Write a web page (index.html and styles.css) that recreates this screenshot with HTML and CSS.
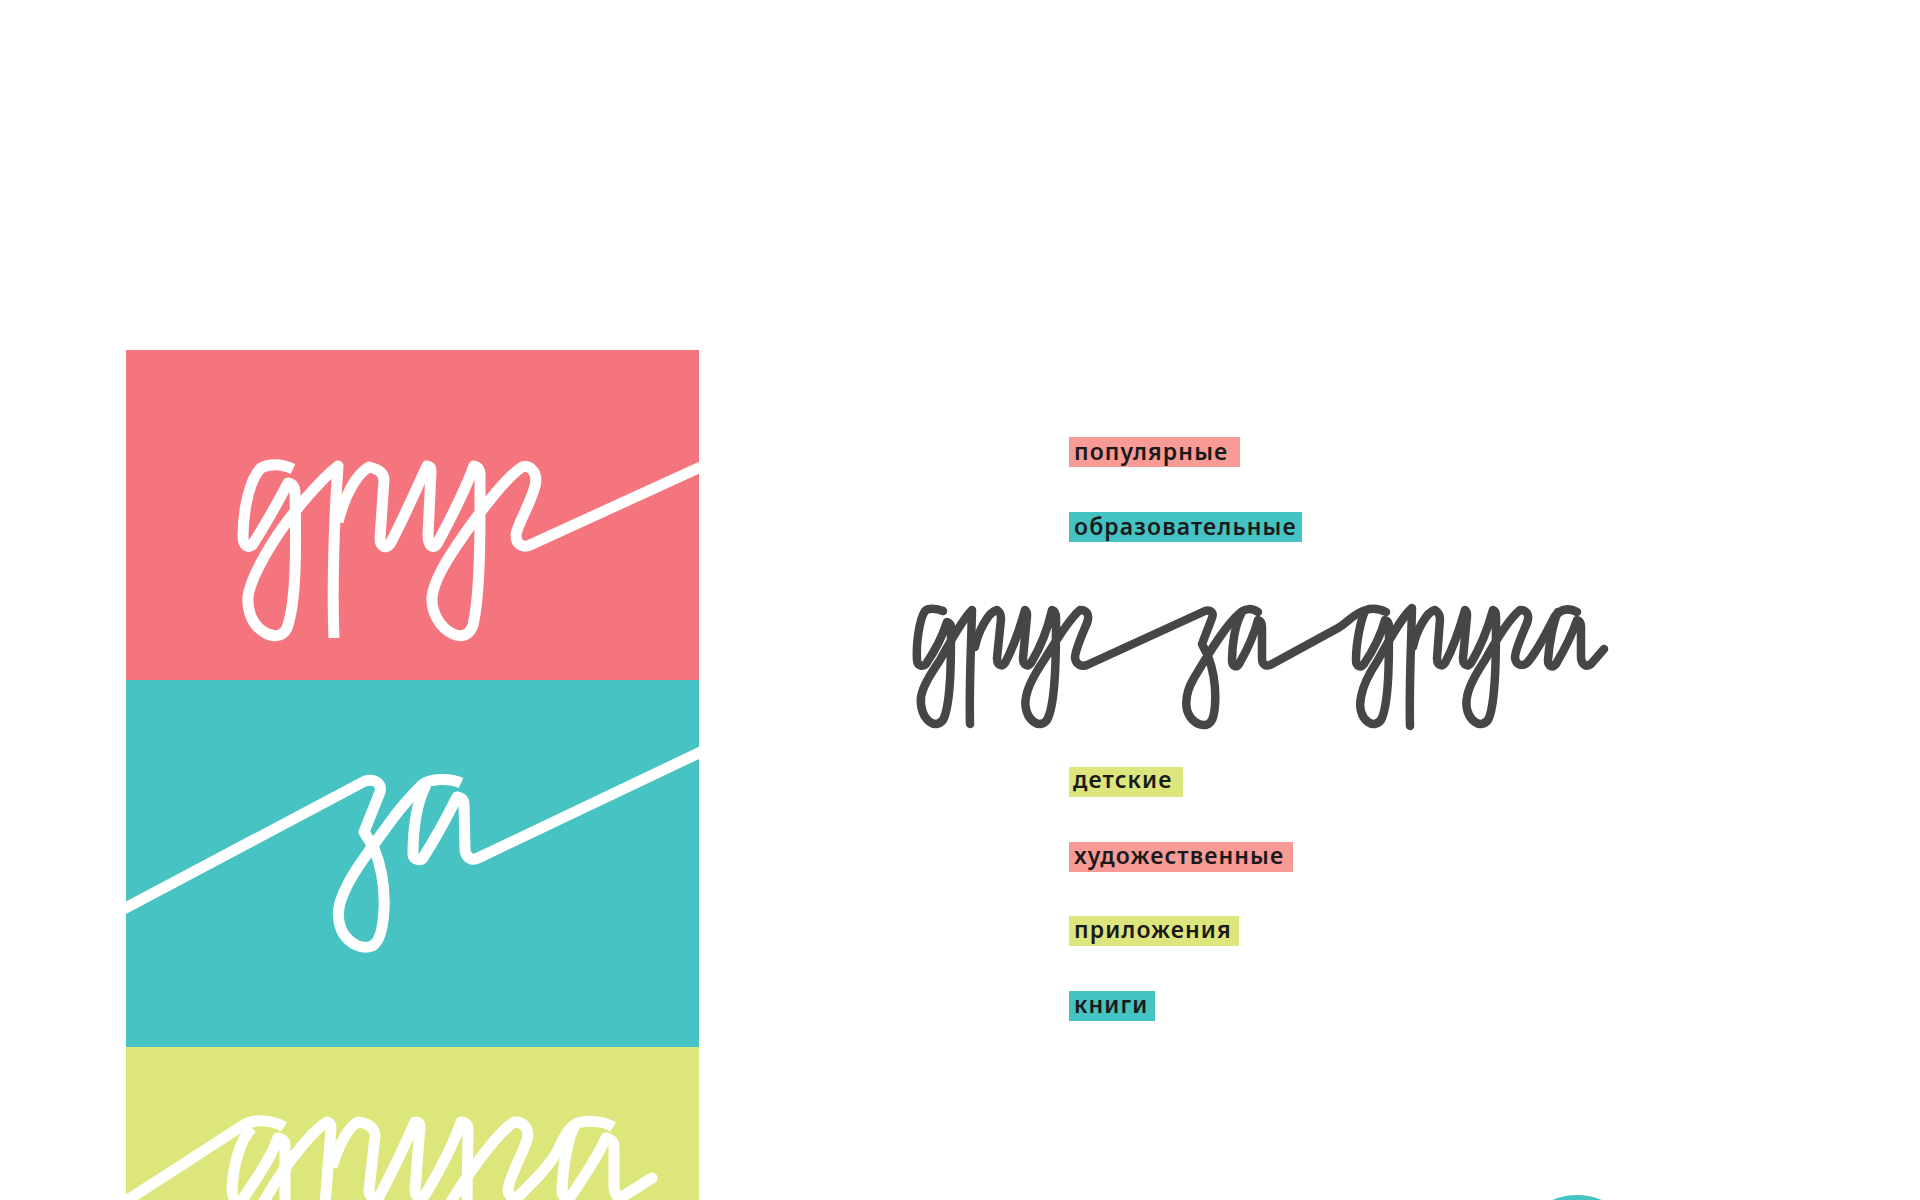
FILE: index.html
```html
<!DOCTYPE html>
<html lang="ru">

<head>
    <meta charset="utf-8">
    <title>Друг за друга</title>
    <link rel="stylesheet" href="styles.css">
</head>

<body>
    <div class="page">
        <div class="panels">
            <div class="panel panel-pink">
                <svg class="script" width="573" height="330" viewBox="126 350 573 330">
                    <path d="M293 469 C280 463 268 464 261 468 C250 478 243 510 243 536 C243 546 249 549 253 544 C265 525 279 500 288 483 C293 484 295 488 295 492 C296 540 297 600 287 628 C282 638 272 637 264 632 C252 625 247 610 248 597 C250 580 263 558 273 542 C290 515 320 480 338 466 C334 520 332 590 334 638" />
                    <path d="M338 522 C344 498 355 475 369 467 C378 469 384 473 384 480 L380 538 C380 547 386 549 390 544 C403 520 418 485 427 466 C431 467 431 468 431 472 L428 535 C428 547 434 549 437 544 C450 520 465 490 474 466 C478 467 480 470 480 474 C480 520 481 590 473 625 C469 637 460 637 453 634 C440 628 431 612 432 597 C434 580 447 560 457 545 C475 518 505 478 522 467 C532 464 538 475 535 486 C530 505 517 525 516 535 C516 545 523 548 530 545 L705 465" />
                </svg>
            </div>
            <div class="panel panel-teal">
                <svg class="script" width="573" height="367" viewBox="126 680 573 367">
                    <path d="M120 911 L365 781 C375 778 382 784 380 792 L364 832 L374 848 C382 868 385 890 384 910 C383 928 380 942 372 946 C362 950 350 944 343 933 C337 922 337 908 342 897 C350 875 370 850 388 825 C400 808 412 795 422 785 C430 778 450 778 461 783" />
                    <path d="M426 785 C418 800 413 825 413 855 C414 860 420 861 423 858 C433 842 448 815 457 797 C462 798 464 801 464 805 L465 850 C466 858 472 861 478 858 L705 750" />
                </svg>
            </div>
            <div class="panel panel-yellow">
                <svg class="script" width="573" height="153" viewBox="126 1047 573 153">
                    <path d="M120 1205 L242 1126 C252 1119 272 1119 284 1127" />
                    <path d="M252 1128 C240 1140 233 1165 232 1190 C232 1198 236 1202 241 1202 C255 1180 270 1160 278 1138 C283 1139 285 1141 285 1146 L285 1205" />
                    <path d="M262 1205 C280 1172 310 1132 327 1122 C330 1123 331 1125 331 1128 L325 1205" />
                    <path d="M332 1167 C338 1148 347 1128 358 1122 C368 1123 375 1128 375 1136 L369 1190 C369 1198 376 1199 380 1195 C392 1172 405 1145 415 1122 C419 1122 420 1124 420 1127 L415 1190 C415 1198 421 1199 425 1195 C440 1170 452 1148 461 1122 C465 1122 468 1125 468 1129 L467 1205" />
                    <path d="M449 1205 C465 1178 495 1135 514 1122 C524 1121 530 1130 527 1140 C520 1160 508 1180 508 1190 C509 1198 515 1199 520 1195 C535 1180 550 1165 558 1150 C565 1135 570 1126 578 1123 C588 1120 604 1121 613 1127" />
                    <path class="tip" d="M576 1124 C568 1135 563 1165 562 1192 C563 1198 568 1199 571 1196 C582 1180 598 1155 606 1138 C611 1139 614 1142 614 1146 L614 1188 C615 1197 620 1199 625 1195 L652 1178" />
                </svg>
            </div>
        </div>

        <div class="side">
            <ul class="tags">
                <li><span class="tag tag-pink tag-wide">популярные</span></li>
                <li><span class="tag tag-teal tag-tight">образовательные</span></li>
            </ul>
            <svg class="script script-dark" width="720" height="135" viewBox="905 600 720 135">
                <path d="M943 611 C936 608 928 608 925 611 C919 620 916 645 917 660 C917 666 923 667 926 664 C934 652 943 635 947 622 C950 623 951 625 951 628 C951 660 951 700 944 718 C941 725 934 725 930 722 C923 717 920 707 921 697 C923 685 932 672 940 660 C950 642 962 620 972 610 C971 650 969 690 970 724" />
                <path d="M975 647 C978 632 988 612 997 610 C1000 612 1001 615 1001 619 L997 658 C997 666 1002 667 1005 663 C1012 650 1020 628 1025 610 C1027 611 1027 613 1027 616 L1023 658 C1023 666 1028 667 1031 663 C1040 648 1048 628 1052 610 C1055 611 1056 614 1056 618 C1056 650 1056 700 1048 718 C1045 725 1038 725 1034 722 C1027 717 1024 707 1026 697 C1028 685 1036 672 1044 660 C1055 642 1070 618 1080 610 C1087 610 1090 615 1087 623 C1082 635 1075 650 1075 658 C1076 665 1082 667 1087 665 L1205 611 C1211 609 1214 613 1212 618 L1202 644 L1208 656 C1214 672 1216 690 1215 705 C1214 718 1212 723 1206 725 C1198 726 1190 720 1187 710 C1185 700 1188 688 1194 678 C1205 660 1225 625 1240 613 C1245 608 1252 608 1258 612" />
                <path d="M1241 614 C1235 625 1232 645 1232 660 C1232 667 1237 668 1239 664 C1246 652 1254 635 1258 620 C1261 621 1262 623 1262 627 L1262 658 C1262 666 1267 667 1272 664 L1338 628 C1348 622 1354 613 1366 610 C1372 608 1380 609 1386 612" />
                <path d="M1365 611 C1360 622 1356 645 1356 660 C1356 667 1361 668 1364 664 C1372 652 1381 635 1385 620 C1388 621 1389 623 1389 627 C1389 660 1389 700 1382 718 C1379 725 1372 725 1368 722 C1361 717 1359 707 1361 697 C1363 685 1370 672 1378 660 C1388 642 1401 618 1412 608 C1411 650 1409 690 1410 726" />
                <path d="M1413 647 C1416 632 1426 612 1435 610 C1438 612 1440 615 1440 619 L1437 658 C1437 666 1442 667 1445 663 C1452 650 1460 628 1465 610 C1467 611 1467 613 1467 616 L1463 658 C1463 666 1468 667 1471 663 C1480 648 1488 628 1493 610 C1496 611 1496 614 1496 618 C1496 650 1496 700 1489 718 C1486 725 1479 725 1475 722 C1468 717 1465 707 1467 697 C1469 685 1477 672 1485 660 C1495 642 1510 618 1520 610 C1527 610 1530 615 1527 623 C1522 635 1515 650 1515 658 C1516 665 1522 667 1527 663 C1537 652 1548 630 1555 616 C1562 608 1570 608 1577 612" />
                <path d="M1558 612 C1553 622 1549 645 1548 660 C1548 667 1553 668 1556 664 C1563 652 1572 635 1577 620 C1580 621 1581 623 1581 627 L1581 658 C1582 666 1587 667 1591 664 L1604 649" />
            </svg>
            <ul class="tags tags-low">
                <li><span class="tag tag-yellow tag-loose">детские</span></li>
                <li><span class="tag tag-pink tag-mid">художественные</span></li>
                <li><span class="tag tag-yellow">приложения</span></li>
                <li><span class="tag tag-teal">книги</span></li>
            </ul>
        </div>

        <div class="dot"></div>
    </div>
</body>

</html>
```

FILE: styles.css
```css
* {
    margin: 0;
    padding: 0;
    box-sizing: border-box;
}

body {
    background: #ffffff;
    font-family: "Noto Sans", sans-serif;
}

.page {
    position: relative;
    display: flex;
    height: 1200px;
    padding: 350px 0 0 126px;
    overflow: hidden;
}

.panels {
    width: 573px;
    flex-shrink: 0;
}

.panel svg {
    display: block;
}

.panel-pink {
    height: 330px;
    background: #f5757f;
}

.panel-teal {
    height: 367px;
    background: #47c3c3;
}

.panel-yellow {
    height: 153px;
    background: #dce67b;
}

.script {
    overflow: hidden;
}

.script path {
    fill: none;
    stroke: #ffffff;
    stroke-width: 11;
    stroke-linecap: butt;
    stroke-linejoin: round;
}

.script .tip {
    stroke-linecap: round;
}

.script-dark {
    display: block;
    margin: 58px 0 32px;
}

.script-dark path {
    stroke: #464646;
    stroke-width: 8.5;
    stroke-linecap: round;
}

.side {
    margin-left: 206px;
    padding-top: 87px;
}

.tags {
    display: flex;
    flex-direction: column;
    gap: 45px;
    margin-left: 164px;
    list-style: none;
}

.tags-low {
    gap: 44.5px;
}

.tag {
    display: inline-block;
    height: 30px;
    padding: 0 7px 0 5px;
    font-size: 23px;
    font-weight: 600;
    line-height: 28px;
    letter-spacing: 1.1px;
    color: #1a1a1a;
    white-space: nowrap;
}

.tags-low .tag {
    line-height: 27px;
}

.tags-low .tag-loose {
    padding: 0 11px 0 4px;
    line-height: 25px;
}

.tags-low .tag-mid {
    padding-right: 9px;
    line-height: 26px;
}

.tag-wide {
    padding-right: 12px;
}

.tag-tight {
    padding-right: 5px;
}

.tag-pink {
    background: #f89a96;
}

.tag-teal {
    background: #45c3c3;
}

.tag-yellow {
    background: #dde67c;
}

.dot {
    position: absolute;
    left: 1512px;
    top: 1195px;
    width: 130px;
    height: 130px;
    border-radius: 50%;
    background: #47c3c3;
}
```
